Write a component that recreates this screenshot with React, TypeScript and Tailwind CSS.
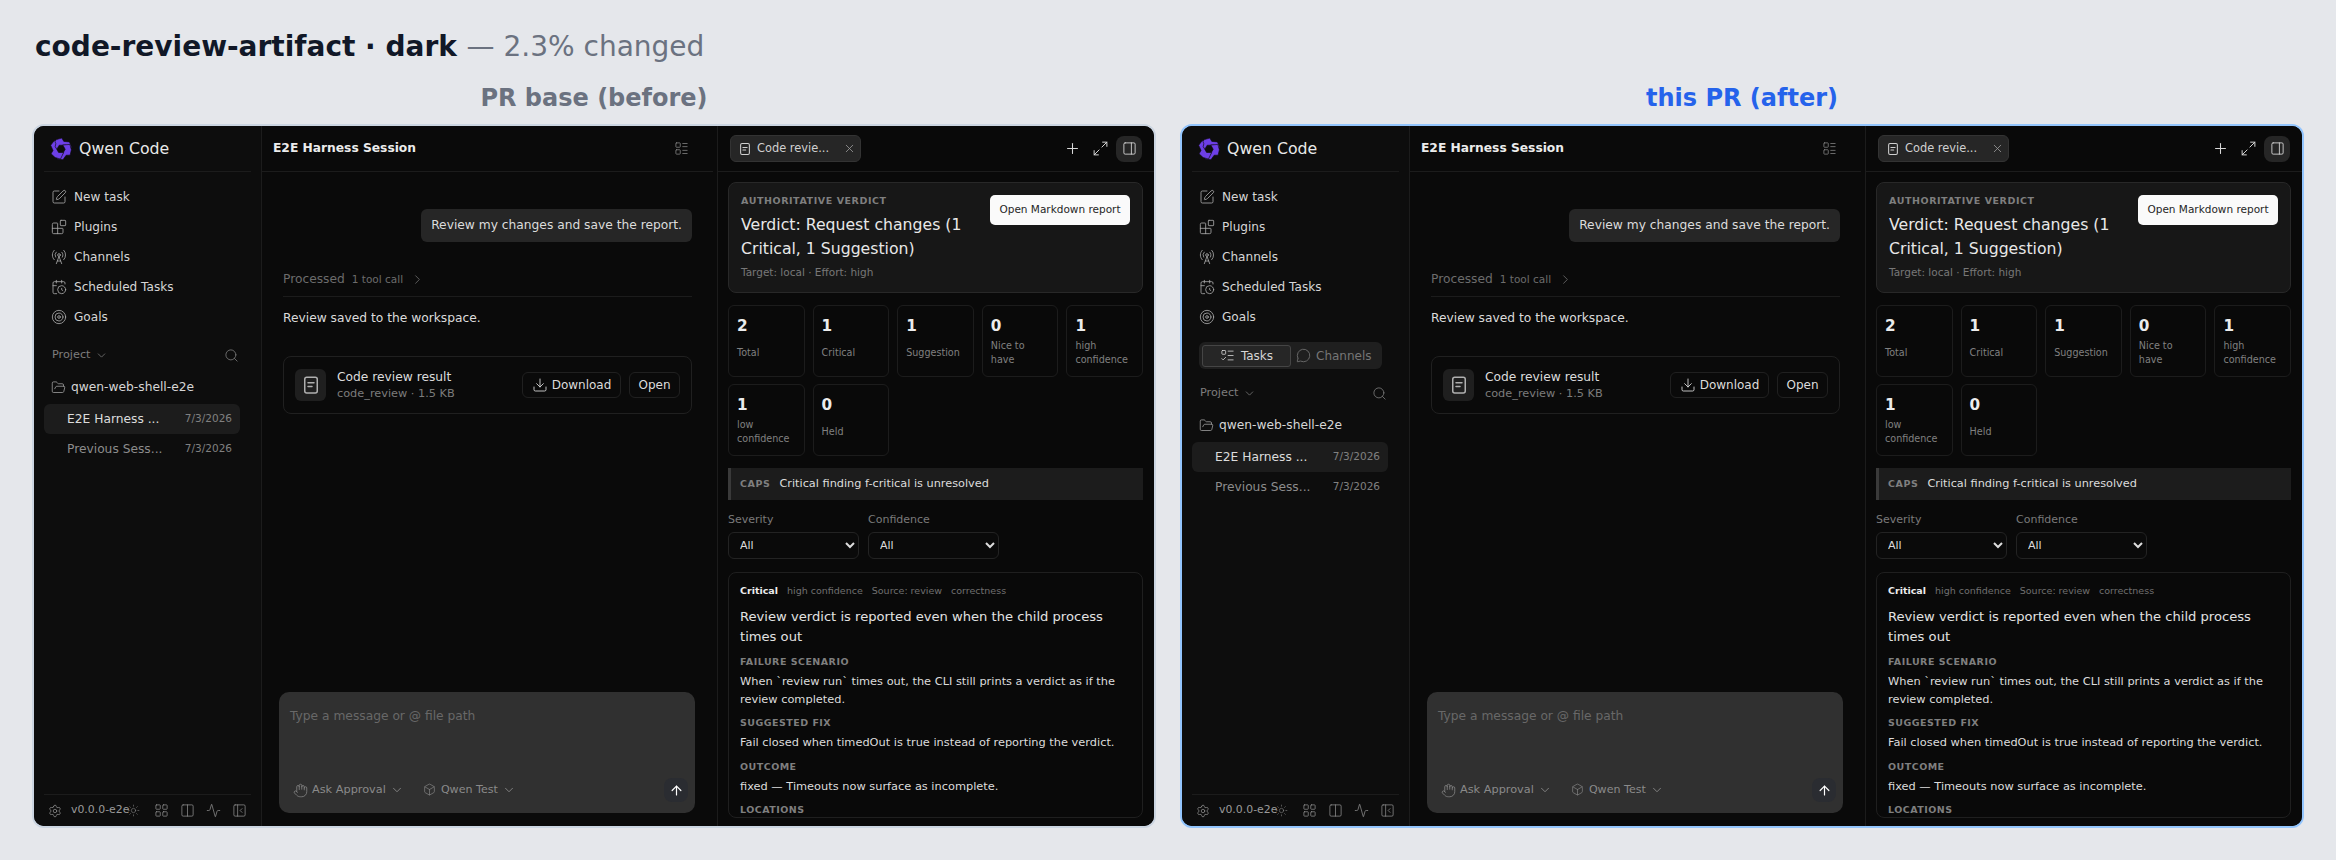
import {
    Activity,
    ArrowUp,
    Blocks,
    Box,
    CalendarClock,
    ChevronDown,
    ChevronRight,
    Columns2,
    Download,
    FolderOpen,
    Hand,
    LayoutGrid,
    LayoutList,
    ListTodo,
    Maximize2,
    MessageCircle,
    PanelLeftClose,
    PanelRight,
    Plus,
    RadioTower,
    Search,
    Settings,
    SquarePen,
    Sun,
    Target,
    X,
} from 'lucide-react';

const NAV_ITEMS = [
    { label: 'New task', Icon: SquarePen },
    { label: 'Plugins', Icon: Blocks },
    { label: 'Channels', Icon: RadioTower },
    { label: 'Scheduled Tasks', Icon: CalendarClock },
    { label: 'Goals', Icon: Target },
];

const STATS = [
    { value: '2', label: 'Total' },
    { value: '1', label: 'Critical' },
    { value: '1', label: 'Suggestion' },
    { value: '0', label: 'Nice to have' },
    { value: '1', label: 'high confidence' },
    { value: '1', label: 'low confidence' },
    { value: '0', label: 'Held' },
];

const QwenLogo = () => (
    <svg viewBox="0 0 24 24" className="h-[24px] w-[24px] shrink-0" fill="#6d3fe6" stroke="#0d0d0d" strokeWidth="0.6">
        {[0, 120, 240].map((deg) => (
            <path
                key={deg}
                transform={`rotate(${deg} 12 12)`}
                d="M7.5 2.6 12.8 1l2 3.4 5.6.5 2.4 5.8-3.6-.5-2.2-2H10.2l-2.6 4.3-4-5.9z"
            />
        ))}
    </svg>
);

const ReportIcon = ({ size }: { size: number }) => (
    <svg
        width={size}
        height={size}
        viewBox="0 0 16 16"
        fill="none"
        stroke="currentColor"
        strokeWidth="1.2"
        strokeLinecap="round"
        className="shrink-0"
    >
        <rect x="3" y="1.7" width="10" height="12.6" rx="1.6" />
        <path d="M5.6 6.2h4.8M5.6 9.2h3.2" />
    </svg>
);

const Sidebar = ({ after }: { after: boolean }) => (
    <aside className="flex h-full w-[228px] shrink-0 flex-col border-r border-[#1c1c1c] bg-[#0d0d0d] px-[10px]">
        <div className="flex h-[46px] shrink-0 items-center gap-[6px] border-b border-[#1c1c1c] pl-[5px]">
            <QwenLogo />
            <span className="text-[15.75px] text-[#e8e8e8]">Qwen Code</span>
        </div>
        <nav className="mt-[10px] flex flex-col">
            {NAV_ITEMS.map(({ label, Icon }) => (
                <div key={label} className="flex h-[30px] items-center gap-[7px] pl-[7px] text-[12.1px] text-[#d6d6d6]">
                    <Icon size={16} strokeWidth={1.25} className="shrink-0 text-[#a8a8a8]" />
                    <span>{label}</span>
                </div>
            ))}
        </nav>
        {after && (
            <div className="mt-[10px] ml-[7px] flex h-[27px] w-[183px] items-center rounded-[6px] bg-[#1f1f1f] p-[3px] text-[12px]">
                <div className="flex h-[22px] w-[89px] items-center justify-center gap-[6px] rounded-[3px] border border-[#454545] bg-[#262626] text-[#d6d6d6]">
                    <ListTodo size={15} strokeWidth={1.3} />
                    Tasks
                </div>
                <div className="flex items-center gap-[5px] pl-[5px] text-[#767676]">
                    <MessageCircle size={15} strokeWidth={1.3} />
                    Channels
                </div>
            </div>
        )}
        <div
            className={`${after ? 'mt-[12px]' : 'mt-[11px]'} flex h-[24px] items-center justify-between pr-[12px] pl-[8px] text-[#7d7d7d]`}
        >
            <div className="flex items-center gap-[4px] text-[11.25px]">
                Project
                <ChevronDown size={13} strokeWidth={1.4} />
            </div>
            <Search size={15} strokeWidth={1.3} />
        </div>
        <div className="mt-[6px] flex h-[28px] items-center gap-[5px] pl-[7px] text-[12.25px] text-[#d6d6d6]">
            <FolderOpen size={15} strokeWidth={1.2} className="shrink-0 text-[#a8a8a8]" />
            qwen-web-shell-e2e
        </div>
        <div className="mt-[3px] flex h-[30px] w-[196px] items-center justify-between rounded-[6px] bg-[#1c1c1c] pr-[8px] pl-[23px] text-[12.25px] text-[#dcdcdc]">
            <span>E2E Harness ...</span>
            <span className="text-[10.5px] text-[#808080]">7/3/2026</span>
        </div>
        <div className="flex h-[30px] w-[196px] items-center justify-between pr-[8px] pl-[23px] text-[12.25px] text-[#8c8c8c]">
            <span>Previous Sess...</span>
            <span className="text-[10.5px] text-[#808080]">7/3/2026</span>
        </div>
        <div className="mt-auto flex h-[32px] shrink-0 items-center border-t border-[#1c1c1c] pr-[4px] pl-[4px] text-[#8f8f8f]">
            <Settings size={14} strokeWidth={1.3} className="shrink-0" />
            <span className="ml-[9px] w-[56px] shrink-0 text-[10.9px] whitespace-nowrap text-[#9a9a9a]">v0.0.0-e2e</span>
            <Sun size={13} strokeWidth={1} className="shrink-0" />
            <div className="ml-auto flex gap-[11px]">
                <LayoutGrid size={15} strokeWidth={1.2} />
                <Columns2 size={15} strokeWidth={1.2} />
                <Activity size={15} strokeWidth={1.2} />
                <PanelLeftClose size={15} strokeWidth={1.2} />
            </div>
        </div>
    </aside>
);

const Chat = () => (
    <section className="flex h-full w-[451px] shrink-0 flex-col bg-[#0a0a0a]">
        <div className="flex h-[46px] shrink-0 items-center justify-between border-b border-[#1c1c1c] pr-[24px] pl-[11px]">
            <span className="text-[12.25px] font-bold text-[#ececec]">E2E Harness Session</span>
            <LayoutList size={15} strokeWidth={1.2} className="text-[#8a8a8a]" />
        </div>
        <div className="flex flex-col px-[21px]">
            <div className="mt-[37px] flex justify-end">
                <div className="flex h-[33px] items-center rounded-[6px] bg-[#262626] px-[10px] text-[12.25px] text-[#dcdcdc]">
                    Review my changes and save the report.
                </div>
            </div>
            <div className="mt-[26px] flex h-[29px] items-center gap-[7px] border-b border-[#1c1c1c] pb-[5px] text-[#6c6c6c]">
                <span className="text-[12.25px]">Processed</span>
                <span className="text-[10.5px]">1 tool call</span>
                <ChevronRight size={15} strokeWidth={1.3} />
            </div>
            <p className="mt-[12px] text-[12.25px] leading-[18px] text-[#dcdcdc]">Review saved to the workspace.</p>
            <div className="mt-[29px] flex h-[58px] items-center rounded-[8px] border border-[#202020] px-[11px]">
                <div className="flex h-[32px] w-[31px] items-center justify-center rounded-[6px] bg-[#1f1f1f] text-[#b0b0b0]">
                    <ReportIcon size={20} />
                </div>
                <div className="ml-[11px] flex flex-col">
                    <span className="text-[12.25px] leading-[18px] text-[#dcdcdc]">Code review result</span>
                    <span className="text-[11.3px] leading-[16px] text-[#7c7c7c]">code_review · 1.5 KB</span>
                </div>
                <div className="ml-auto flex h-[26px] w-[99px] items-center justify-center gap-[4px] rounded-[6px] border border-[#202020] text-[12px] text-[#dcdcdc]">
                    <Download size={16} strokeWidth={1.3} />
                    Download
                </div>
                <div className="ml-[8px] flex h-[26px] w-[51px] items-center justify-center rounded-[6px] border border-[#202020] text-[12px] text-[#dcdcdc]">
                    Open
                </div>
            </div>
        </div>
        <div className="mt-auto mr-[18px] mb-[13px] ml-[17px] flex h-[121px] shrink-0 flex-col rounded-[10px] bg-[#303030] pr-[7px] pb-[11px] pl-[11px]">
            <div className="mt-[15px] text-[12.25px] leading-[18px] text-[#686868]">Type a message or @ file path</div>
            <div className="mt-auto flex items-center text-[#8a8a8a]">
                <div className="ml-[3px] flex items-center">
                    <Hand size={15} strokeWidth={1.2} />
                    <span className="ml-[4px] text-[11.3px]">Ask Approval</span>
                    <ChevronDown size={14} strokeWidth={1.5} className="ml-[4px]" />
                </div>
                <div className="ml-[19px] flex items-center">
                    <Box size={13} strokeWidth={1.2} />
                    <span className="ml-[5px] text-[11.1px]">Qwen Test</span>
                    <ChevronDown size={14} strokeWidth={1.5} className="ml-[4px]" />
                </div>
                <div className="ml-auto flex h-[24px] w-[24px] items-center justify-center rounded-[8px] bg-[#2a2c31] text-white">
                    <ArrowUp size={15} strokeWidth={1.9} />
                </div>
            </div>
        </div>
    </section>
);

const SectionLabel = ({ children }: { children: React.ReactNode }) => (
    <div className="mt-[8px] text-[9.5px] leading-[14px] font-bold tracking-[0.05em] text-[#7f7f7f] uppercase">
        {children}
    </div>
);

const SectionText = ({ children }: { children: React.ReactNode }) => (
    <p className="mt-[4px] text-[11.375px] leading-[17.6px] text-[#dcdcdc]">{children}</p>
);

const Filter = ({ label }: { label: string }) => (
    <label className="flex w-[131px] flex-col gap-[4px] text-[11px] leading-[16px] text-[#7a7a7a]">
        {label}
        <select className="h-[27px] rounded-[6px] border border-[#232323] bg-[#0a0a0a] px-[7px] text-[11px] text-[#dcdcdc] [color-scheme:dark]">
            <option>All</option>
        </select>
    </label>
);

const Review = () => (
    <section className="flex h-full min-w-0 flex-1 flex-col border-l border-[#1c1c1c] bg-[#090909]">
        <div className="flex h-[46px] shrink-0 items-center border-b border-[#1c1c1c] pr-[12px] pl-[12px]">
            <div className="flex h-[27px] w-[131px] items-center rounded-[6px] border border-[#333333] bg-[#262626] pr-[4px] pl-[7px] text-[11.4px] text-[#d0d0d0]">
                <ReportIcon size={14} />
                <span className="ml-[5px]">Code revie...</span>
                <X size={13} strokeWidth={1.5} className="ml-auto text-[#9a9a9a]" />
            </div>
            <Plus size={17} strokeWidth={1.5} className="ml-auto text-[#d8d8d8]" />
            <Maximize2 size={17} strokeWidth={1.4} className="ml-[11px] text-[#d8d8d8]" />
            <div className="ml-[7px] flex h-[26px] w-[26px] items-center justify-center rounded-[8px] bg-[#262626] text-[#d8d8d8]">
                <PanelRight size={15} strokeWidth={1.4} />
            </div>
        </div>
        <div className="flex min-h-0 flex-1 flex-col overflow-hidden pr-[11px] pl-[10px]">
            <div className="mt-[10px] flex h-[111px] shrink-0 justify-between rounded-[8px] border border-[#282828] bg-[#171717] pt-[11px] pr-[12px] pl-[12px]">
                <div>
                    <div className="text-[9.5px] leading-[14px] font-bold tracking-[0.06em] text-[#7f7f7f] uppercase">
                        Authoritative verdict
                    </div>
                    <h2 className="mt-[5px] w-[235px] text-[15.7px] leading-[24px] font-normal text-[#e8e8e8]">
                        Verdict: Request changes (1 Critical, 1 Suggestion)
                    </h2>
                    <div className="mt-[3px] text-[10.5px] leading-[16px] text-[#777777]">Target: local · Effort: high</div>
                </div>
                <div className="mt-[1px] flex h-[30px] w-[140px] shrink-0 items-center justify-center rounded-[5px] bg-[#fafafa] text-[10.5px] text-[#262626]">
                    Open Markdown report
                </div>
            </div>
            <div className="mt-[12px] grid shrink-0 grid-cols-5 gap-x-[8px] gap-y-[7px]">
                {STATS.map((stat) => (
                    <div
                        key={stat.label}
                        className="flex h-[72px] flex-col rounded-[6px] border border-[#1c1c1c] pt-[9px] pr-[8px] pl-[8px]"
                    >
                        <div className="text-[15.25px] leading-[22px] font-bold text-[#ececec]">{stat.value}</div>
                        <div className="flex flex-1 items-center pb-[7px] text-[9.6px] leading-[14px] text-[#808080]">
                            {stat.label}
                        </div>
                    </div>
                ))}
            </div>
            <div className="mt-[12px] flex h-[32px] shrink-0 items-center gap-[9px] border-l-[3px] border-[#3a3a3a] bg-[#1c1c1c] pl-[9px]">
                <span className="text-[9.5px] font-bold tracking-[0.06em] text-[#7f7f7f]">CAPS</span>
                <span className="text-[11.3px] text-[#dcdcdc]">Critical finding f-critical is unresolved</span>
            </div>
            <div className="mt-[12px] flex shrink-0 gap-[9px]">
                <Filter label="Severity" />
                <Filter label="Confidence" />
            </div>
            <div className="mt-[13px] shrink-0 rounded-[8px] border border-[#1f1f1f] pt-[11px] pr-[11px] pl-[11px]">
                <div className="flex gap-[9px] text-[9.5px] leading-[14px] text-[#707070]">
                    <span className="font-bold text-[#ececec]">Critical</span>
                    <span>high confidence</span>
                    <span>Source: review</span>
                    <span>correctness</span>
                </div>
                <h3 className="mt-[9px] text-[13.125px] leading-[20px] font-normal text-[#e2e2e2]">
                    Review verdict is reported even when the child process times out
                </h3>
                <SectionLabel>Failure scenario</SectionLabel>
                <SectionText>When `review run` times out, the CLI still prints a verdict as if the review completed.</SectionText>
                <SectionLabel>Suggested fix</SectionLabel>
                <SectionText>Fail closed when timedOut is true instead of reporting the verdict.</SectionText>
                <SectionLabel>Outcome</SectionLabel>
                <SectionText>fixed — Timeouts now surface as incomplete.</SectionText>
                <SectionLabel>Locations</SectionLabel>
            </div>
        </div>
    </section>
);

const Shot = ({ after }: { after: boolean }) => (
    <div
        className={`flex h-[704px] w-[1124px] overflow-hidden rounded-[12px] border-2 bg-[#0a0a0a] ${after ? 'border-[#93c5fd]' : 'border-[#cbd5e1]'}`}
    >
        <Sidebar after={after} />
        <Chat />
        <div className="w-[4px] shrink-0 bg-[#0a0a0a]" />
        <Review />
    </div>
);

const App = () => (
    <div className="h-[860px] w-[2336px] overflow-hidden bg-[#e5e7eb] px-[32px] pt-[29px] [font-family:'DejaVu_Sans',sans-serif]">
        <h1 className="pl-[3px] text-[28px] leading-[36px] font-bold text-[#111827]">
            code-review-artifact · dark <span className="font-normal text-[#6b7280]">— 2.3% changed</span>
        </h1>
        <div className="mt-[19px] flex gap-[24px]">
            <div className="flex flex-col">
                <div className="mb-[12px] text-center text-[24px] leading-[28px] font-bold text-[#6b7280]">PR base (before)</div>
                <Shot after={false} />
            </div>
            <div className="flex flex-col">
                <div className="mb-[12px] text-center text-[24px] leading-[28px] font-bold text-[#2563eb]">this PR (after)</div>
                <Shot after />
            </div>
        </div>
    </div>
);

export default App;
